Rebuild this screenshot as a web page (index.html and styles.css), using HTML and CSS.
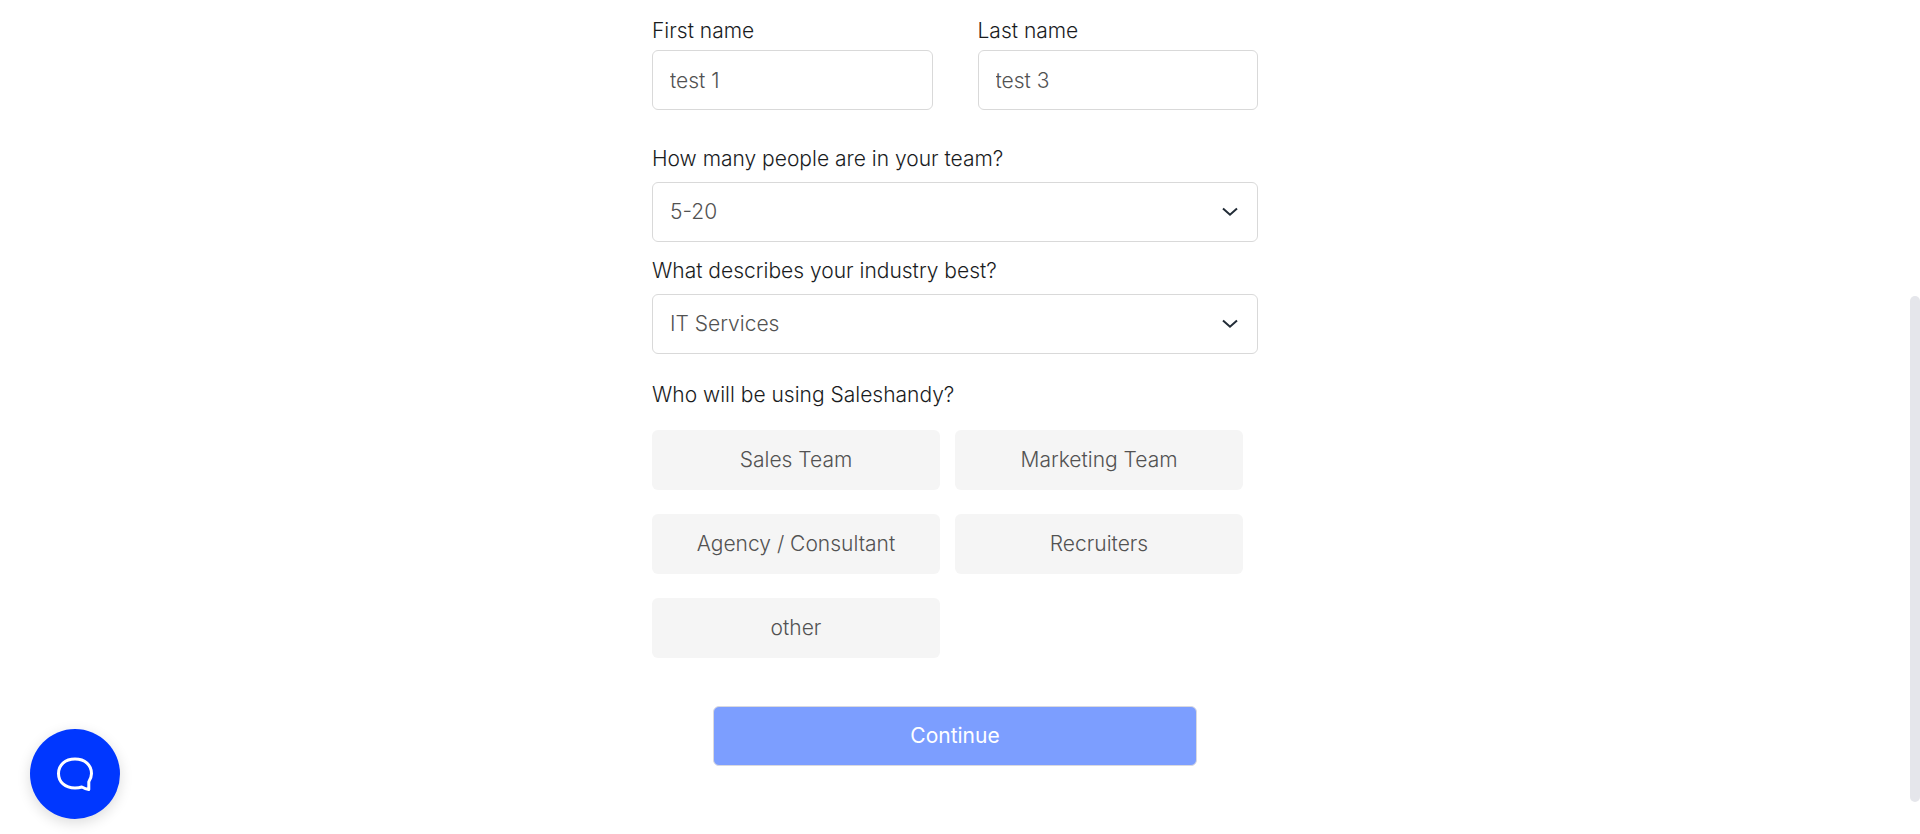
FILE: index.html
```html
<!DOCTYPE html>
<html lang="en">
<head>
<meta charset="utf-8">
<title>Saleshandy</title>
<link rel="stylesheet" href="styles.css">
</head>
<body>
<main class="page">
  <form class="form">
    <div class="names">
      <div class="field">
        <label class="label" for="first">First name</label>
        <input class="control" id="first" type="text" value="test 1">
      </div>
      <div class="field">
        <label class="label" for="last">Last name</label>
        <input class="control" id="last" type="text" value="test 3">
      </div>
    </div>
    <div class="field field-wide field-team">
      <label class="label" for="team">How many people are in your team?</label>
      <div class="select">
        <select class="control" id="team"><option>5-20</option></select>
        <svg class="chevron" viewBox="0 0 16 16" aria-hidden="true"><path d="M1 4.500 8 10.700 15 4.500"/></svg>
      </div>
    </div>
    <div class="field field-wide field-industry">
      <label class="label" for="industry">What describes your industry best?</label>
      <div class="select">
        <select class="control" id="industry"><option>IT Services</option></select>
        <svg class="chevron" viewBox="0 0 16 16" aria-hidden="true"><path d="M1 4.500 8 10.700 15 4.500"/></svg>
      </div>
    </div>
    <fieldset class="users">
      <legend class="label">Who will be using Saleshandy?</legend>
      <div class="choices">
        <button class="choice" type="button">Sales Team</button>
        <button class="choice" type="button">Marketing Team</button>
        <button class="choice" type="button">Agency / Consultant</button>
        <button class="choice" type="button">Recruiters</button>
        <button class="choice" type="button">other</button>
      </div>
    </fieldset>
    <button class="continue" type="submit">Continue</button>
  </form>
</main>
<div class="thumb"></div>
<button class="chat" type="button" aria-label="Open chat">
  <svg class="chat-icon" viewBox="0 0 38 36" aria-hidden="true"><path d="M25.800 31C23.800 31.700 21.500 32 19 32C9 32 2.500 26 2.500 17.500C2.500 9 9 3 19 3C29 3 35.500 9 35.500 17.500C35.500 21 34.300 23.500 32.800 25.800V33.600Q29.500 33 25.800 31Z"/></svg>
</button>
</body>
</html>
```

FILE: styles.css
```css
* {
  box-sizing: border-box;
}

body {
  margin: 0;
  background: #fff;
  color: #1a1c1e;
  font: 300 21px/24px Inter, "Liberation Sans", sans-serif;
}

button,
input,
select {
  font: inherit;
}

.page {
  padding: 19px 16px 68px;
  margin-right: 10px;
}

.form {
  display: flex;
  flex-direction: column;
  max-width: 606px;
  margin: 0 auto;
}

.names {
  display: grid;
  grid-template-columns: 1fr 1fr;
  gap: 45px;
}

.field {
  display: flex;
  flex-direction: column;
  gap: 7px;
}

.field-wide {
  gap: 11px;
}

.field-team {
  margin-top: 37px;
}

.field-industry {
  margin-top: 17px;
}

.label {
  padding: 0;
}

.control {
  width: 100%;
  height: 60px;
  padding: 0 17px;
  border: 1px solid #d9d9d9;
  border-radius: 6px;
  background: #fff;
  color: #525252;
  appearance: none;
}

.select {
  position: relative;
}

.chevron {
  position: absolute;
  top: 22px;
  right: 20px;
  width: 16px;
  height: 16px;
  fill: none;
  stroke: #212b36;
  stroke-width: 2;
  pointer-events: none;
}

.users {
  margin: 29px 0 0;
  padding: 0;
  border: 0;
}

.choices {
  display: grid;
  grid-template-columns: 1fr 1fr;
  gap: 24px 15px;
  margin: 23px 15px 0 0;
}

.choice {
  height: 60px;
  padding: 0 16px;
  border: 0;
  border-radius: 6px;
  background: #f5f5f5;
  color: #525252;
}

.continue {
  width: 80%;
  height: 60px;
  margin: 48px auto 0;
  border: 1px solid #d9d9e0;
  border-radius: 6px;
  background: #7c9eff;
  color: #fff;
  font-weight: 400;
}

.thumb {
  position: fixed;
  top: 296px;
  right: 0;
  bottom: 32px;
  width: 10px;
  border-radius: 5px;
  background: #e5e6eb;
}

.chat {
  position: fixed;
  left: 30px;
  bottom: 15px;
  display: grid;
  place-items: center;
  width: 90px;
  height: 90px;
  padding: 0;
  border: 0;
  border-radius: 50%;
  background: #0037ff;
  box-shadow: 0 4px 14px rgba(0, 0, 0, 0.14);
}

.chat-icon {
  width: 38px;
  height: 36px;
  fill: none;
  stroke: #fff;
  stroke-width: 3;
  stroke-linejoin: round;
}
```
